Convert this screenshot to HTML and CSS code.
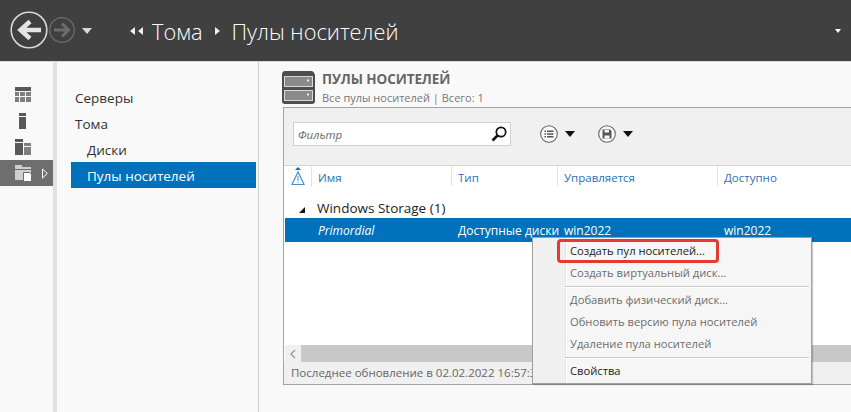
FILE: index.html
```html
<!DOCTYPE html>
<html lang="ru">
<head>
<meta charset="utf-8">
<title>Пулы носителей</title>
<link rel="stylesheet" href="styles.css">
</head>
<body>
<header class="topbar">
  <div class="nav-buttons">
    <svg class="back" width="38" height="38" viewBox="0 0 38 38"><circle cx="19" cy="19" r="17.800" fill="none" stroke="#d8d8d8" stroke-width="1.600"/><path d="M31 19H12M20 10.500L10.500 19l9.500 8.500" fill="none" stroke="#e4e4e4" stroke-width="4.500"/></svg>
    <svg class="forward" width="26" height="26" viewBox="0 0 26 26"><circle cx="13" cy="13" r="12.300" fill="none" stroke="#6c6c6c" stroke-width="1.300"/><path d="M5 13h14M13 6.500l6.500 6.500-6.500 6.500" fill="none" stroke="#6c6c6c" stroke-width="3"/></svg>
    <span class="caret-white"></span>
  </div>
  <nav class="crumbs">
    <span class="dbl-arrow">
      <svg width="13" height="8" viewBox="0 0 13 8"><path d="M5 0v8L0 4zM13 0v8L8 4z" fill="#eee"/></svg>
    </span>
    <span class="crumb">Тома</span>
    <svg class="sep" width="5" height="8" viewBox="0 0 5 8"><path d="M0 0v8l5-4z" fill="#eee"/></svg>
    <span class="crumb">Пулы носителей</span>
  </nav>
  <span class="caret-corner"></span>
</header>
<div class="main">
  <aside class="rail">
    <svg class="rail-icon rail-first" width="16" height="15" viewBox="0 0 16 15"><path d="M0 0h16v4H0z" fill="#595959"/><path d="M0 5h4v4H0zM5 5h5v4H5zM11 5h5v4h-5zM0 10h4v5H0zM5 10h5v5H5zM11 10h5v5h-5z" fill="#7f7f7f"/></svg>
    <svg class="rail-icon" width="16" height="16" viewBox="0 0 16 16"><path d="M4 0h7v3H4z" fill="#595959"/><path d="M4 4h7v12H4z" fill="#595959"/></svg>
    <svg class="rail-icon" width="16" height="16" viewBox="0 0 16 16"><path d="M0 0h8v3H0zM0 4h8v12H0z" fill="#595959"/><path d="M9 4h7v3H9zM9 8h7v8H9z" fill="#7f7f7f"/></svg>
    <div class="rail-active">
      <svg width="17" height="16" viewBox="0 0 17 16"><path d="M0 0h7v2h9v2H0zM0 5h16v10H0z" fill="#cfcfcf"/><path d="M8.500 7.500h6l2 2v7h-8z" fill="#fff" stroke="#6e6e6e"/></svg>
      <svg width="6" height="11" viewBox="0 0 6 11"><path d="M.5 1v9L5.300 5.500z" fill="none" stroke="#fff"/></svg>
    </div>
  </aside>
  <nav class="sidebar">
    <a class="side-item">Серверы</a>
    <a class="side-item">Тома</a>
    <a class="side-item sub">Диски</a>
    <a class="side-item sub selected">Пулы носителей</a>
  </nav>
  <section class="content">
    <div class="content-head">
      <svg class="pool-icon" width="33" height="33" viewBox="0 0 33 33"><path d="M3 0h26q3 0 4 4v26q0 3-3 3H3q-3 0-3-3V4q0-4 3-4z" fill="#4e4e4e"/><rect x="2.500" y="5.500" width="28" height="10" fill="#8a8a8a" stroke="#d8d8d8"/><rect x="2.500" y="19.500" width="28" height="10" fill="#8a8a8a" stroke="#d8d8d8"/><path d="M25 8.500h2v2h-2zM25 22.500h2v2h-2z" fill="#eee"/></svg>
      <div>
        <h1>ПУЛЫ НОСИТЕЛЕЙ</h1>
        <p>Все пулы носителей | Всего: 1</p>
      </div>
    </div>
    <div class="panel">
      <div class="toolbar">
        <div class="filter">
          <span>Фильтр</span>
          <svg width="18" height="18" viewBox="0 0 18 18"><circle cx="11" cy="7" r="4.700" fill="none" stroke="#111" stroke-width="1.700"/><path d="M7.500 10.500L2.500 15.500" stroke="#111" stroke-width="2.600"/></svg>
        </div>
        <div class="tool">
          <svg width="18" height="18" viewBox="0 0 18 18"><circle cx="9" cy="9" r="8.300" fill="#fafafa" stroke="#666" stroke-width="1.100"/><path d="M4.500 5.500h1.500v1.500H4.500zM7 5.500h6.500v1.500H7zM4.500 8.300h1.500v1.500H4.500zM7 8.300h6.500v1.500H7zM4.500 11h1.500v1.500H4.500zM7 11h6.500v1.500H7z" fill="#555"/></svg>
          <span class="caret-black"></span>
        </div>
        <div class="tool">
          <svg width="18" height="18" viewBox="0 0 18 18"><circle cx="9" cy="9" r="8.300" fill="#fafafa" stroke="#666" stroke-width="1.100"/><path d="M4.500 4.500h7.500l1.500 1.500v7.500h-9z" fill="#555"/><path d="M6.500 5h4.500v2.500H6.500zM6.500 10.500h5v3h-5z" fill="#fafafa"/></svg>
          <span class="caret-black"></span>
        </div>
      </div>
      <div class="columns">
        <div class="col col-warn"><svg width="14" height="19" viewBox="0 0 14 19"><path d="M7 0l3 3H4z" fill="#0a6ebd"/><path d="M7 5L1 17.500h12z" fill="none" stroke="#4a90c8" stroke-width="1.200"/><path d="M6.500 9h1v5h-1zM6.500 15h1v1h-1z" fill="#4a90c8"/></svg></div>
        <div class="col col-name">Имя</div>
        <div class="col col-type">Тип</div>
        <div class="col col-man">Управляется</div>
        <div class="col col-av">Доступно</div>
      </div>
      <div class="group"><span class="group-arrow"></span>Windows Storage (1)</div>
      <div class="row">
        <span class="cell-name">Primordial</span>
        <span class="cell-type">Доступные диски</span>
        <span class="cell-man">win2022</span>
        <span class="cell-av">win2022</span>
      </div>
      <div class="list-space"></div>
      <div class="scrollbar">
        <span class="scroll-left"><svg width="6" height="10" viewBox="0 0 6 10"><path d="M5 1L1 5l4 4" fill="none" stroke="#999" stroke-width="1.400"/></svg></span>
        <span class="scroll-thumb"></span>
      </div>
      <div class="status">Последнее обновление в 02.02.2022 16:57:32</div>
    </div>
    <div class="menu">
      <div class="menu-item">Создать пул носителей...</div>
      <div class="menu-item off">Создать виртуальный диск...</div>
      <div class="menu-line"></div>
      <div class="menu-item off">Добавить физический диск...</div>
      <div class="menu-item off">Обновить версию пула носителей</div>
      <div class="menu-item off">Удаление пула носителей</div>
      <div class="menu-line"></div>
      <div class="menu-item">Свойства</div>
    </div>
    <div class="highlight"></div>
  </section>
</div>
</body>
</html>
```
FILE: styles.css
```css
* { box-sizing: border-box; }
html, body { margin: 0; height: 100%; }
body {
  width: 851px; height: 412px; overflow: hidden;
  font-family: "Open Sans", "Noto Sans", sans-serif;
  background: #f9f9f9; color: #222;
  display: flex; flex-direction: column;
}
.topbar {
  height: 62px; flex: none;
  background: #404040;
  border-bottom: 1px solid #d9d9d9;
  display: flex; align-items: center;
  padding: 0 10px 1px 10px;
}
.nav-buttons { display: flex; align-items: center; width: 120px; }
.forward { margin-left: 1px; }
.caret-white {
  margin-left: 7px; margin-top: 1px;
  border: 5px solid transparent; border-top: 6px solid #d8d8d8; border-bottom: 0;
}
.crumbs { display: flex; align-items: center; color: #fff; font-size: 21.800px; font-weight: 300; flex: 1; }
.dbl-arrow { display: flex; margin-right: 9px; margin-top: 1px; }
.crumb { line-height: 30px; margin-top: 3px; }
.sep { margin: 1px 11px 0 13px; }
.caret-corner {
  border: 3.500px solid transparent; border-top: 4px solid #fff; border-bottom: 0;
  margin-top: 1px;
}
.main { flex: 1; display: flex; min-height: 0; }
.rail {
  width: 57px; flex: none;
  border-right: 4px solid #e1e1e1;
  display: flex; flex-direction: column; align-items: flex-start;
  padding-top: 25px;
}
.rail-icon { margin-left: 15px; margin-bottom: 10px; display: block; }
.rail-first { margin-bottom: 11px; }
.rail-active {
  width: 53px; height: 26px; margin-top: -5px;
  background: #6e6e6e;
  display: flex; align-items: center; gap: 10px;
  padding-left: 15px;
}
.sidebar {
  width: 202px; flex: none;
  border-right: 1px solid #cfcfcf;
  padding: 22px 2px 0 14px;
  display: flex; flex-direction: column;
}
.side-item {
  height: 26px; font-size: 13.500px; line-height: 29px;
  padding-left: 4px; color: #333;
}
.side-item.sub { padding-left: 16px; }
.side-item.selected { background: #0072bc; color: #fff; }
.content { flex: 1; position: relative; padding: 9px 0 0 24px; min-width: 0; }
.content-head { display: flex; gap: 7px; height: 36px; margin-left: -1px; }
.content-head h1 {
  margin: 0; font-size: 13.500px; font-weight: 700; color: #666; line-height: 17px; letter-spacing: -0.100px;
}
.content-head p { margin: 1px 0 0; font-size: 11px; color: #777; line-height: 17px; }
.panel {
  height: 278px; width: 570px;
  border: 1px solid #a3a3a3; border-right: 0;
  display: flex; flex-direction: column;
  background: #fff;
}
.toolbar {
  height: 58px; flex: none;
  background: #f0f0f0;
  border-bottom: 1px solid #d6d6d6;
  display: flex; align-items: center;
  padding: 0 0 5px 9px;
}
.filter {
  width: 218px; height: 24px;
  background: #fff; border: 1px solid #d0d0d0;
  display: flex; align-items: center; justify-content: space-between;
  padding: 0 2px 0 4px;
  font-size: 11.500px; font-style: italic; color: #666;
}
.tool { display: flex; align-items: center; gap: 7px; margin-left: 29px; }
.tool + .tool { margin-left: 23px; }
.caret-black { border: 5.500px solid transparent; border-top: 6px solid #111; border-bottom: 0; }
.columns {
  height: 26px; flex: none;
  display: flex; font-size: 11.500px; color: #2a72b5; line-height: 24px;
}
.col { padding-left: 6px; border-right: 1px solid #e3e3e3; height: 20px; line-height: 23px; }
.col:last-child { border-right: 0; }
.col-warn { width: 28px; padding-left: 7px; line-height: 0; margin-top: 1px; }
.col-name { width: 140px; padding-left: 6px; }
.col-type { width: 106px; }
.col-man { width: 160px; }
.group { height: 26px; flex: none; font-size: 13.500px; padding: 6px 0 0 15px; color: #222; display: flex; align-items: center; gap: 12px; }
.group-arrow { border-right: 6px solid #111; border-top: 6px solid transparent; width: 0; height: 0; margin-top: 3px; }
.row {
  height: 24px; flex: none; margin-left: 1px;
  background: #0072bc; color: #fff;
  font-size: 12px; line-height: 25px;
  display: flex;
}
.cell-name { padding-left: 33px; width: 173px; font-style: italic; }
.cell-type { width: 106px; }
.cell-man { width: 160px; }
.list-space { flex: 1; }
.scrollbar { height: 17px; flex: none; background: #c8c8c8; display: flex; margin-left: 1px; }
.scroll-left { width: 16px; background: #f0f0f0; display: flex; align-items: center; justify-content: center; }
.scroll-thumb { flex: 1; }
.status { height: 22px; flex: none; background: #f0f0f0; font-size: 11.500px; color: #666; line-height: 22px; padding-left: 7px; white-space: nowrap; }
.menu {
  position: absolute; left: 273px; top: 175px;
  width: 280px; height: 147px;
  background: #f6f6f6; border: 1px solid #a0a0a0; box-shadow: 1px 1px 1px rgba(0,0,0,.2);
  padding: 2px 2px 2px 32px;
  font-size: 11.200px;
}
.menu::before { content: ""; position: absolute; left: 0; top: 0; bottom: 0; width: 32px; background: #f0f0f0; border-right: 1px solid #e3e3e3; box-shadow: 1px 0 0 #fff; }
.menu-item { position: relative; height: 22px; line-height: 21px; padding-left: 5px; color: #222; white-space: nowrap; }
.menu-item.off { color: #6d6d6d; }
.menu-line { position: relative; height: 1px; background: #c8c8c8; margin: 2px 0; box-shadow: 0 1px 0 #fff; }
.highlight {
  position: absolute; left: 298px; top: 177px;
  width: 162px; height: 24px;
  border: 3px solid #e23b30; border-radius: 4px;
}
```
